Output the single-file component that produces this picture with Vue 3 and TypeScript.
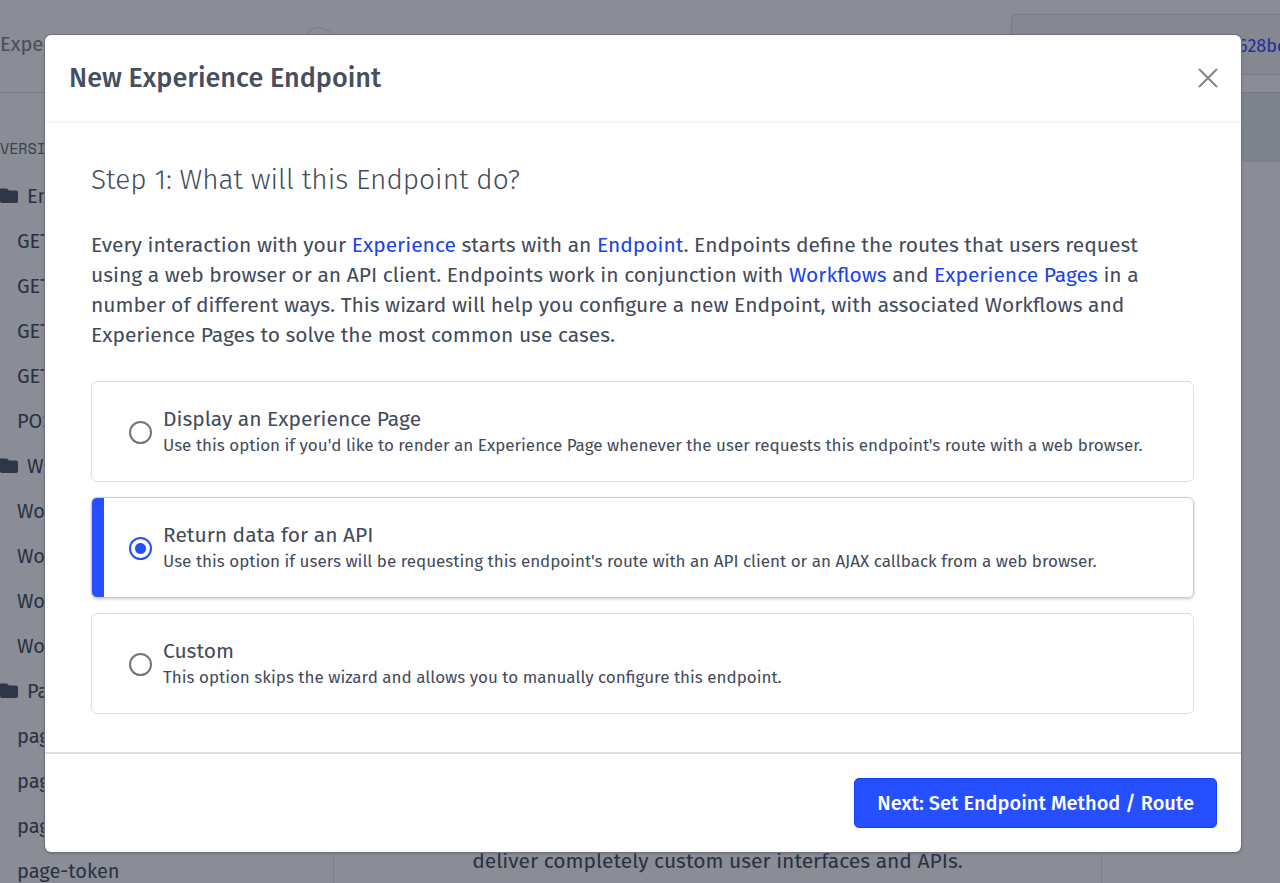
<script setup lang="ts">
import { ref } from 'vue'

interface Choice {
  id: string
  title: string
  description: string
}

interface NavRow {
  label: string
  folder?: boolean
}

const choices: Choice[] = [
  {
    id: 'page',
    title: 'Display an Experience Page',
    description:
      "Use this option if you'd like to render an Experience Page whenever the user requests this endpoint's route with a web browser.",
  },
  {
    id: 'api',
    title: 'Return data for an API',
    description:
      "Use this option if users will be requesting this endpoint's route with an API client or an AJAX callback from a web browser.",
  },
  {
    id: 'custom',
    title: 'Custom',
    description: 'This option skips the wizard and allows you to manually configure this endpoint.',
  },
]

const rows: NavRow[] = [
  { label: 'En', folder: true },
  { label: 'GET' },
  { label: 'GET' },
  { label: 'GET' },
  { label: 'GET' },
  { label: 'POS' },
  { label: 'Wo', folder: true },
  { label: 'Wo' },
  { label: 'Wo' },
  { label: 'Wo' },
  { label: 'Wo' },
  { label: 'Pa', folder: true },
  { label: 'pag' },
  { label: 'pag' },
  { label: 'pag' },
  { label: 'page-token' },
]

const selected = ref('api')
</script>

<template>
  <div class="app">
    <div class="page">
      <header class="topbar">
        <span class="crumb">Expe</span>
        <span class="ring"></span>
        <div class="token">628bd</div>
      </header>
      <div class="columns">
        <nav class="sidebar">
          <h3 class="version">VERSI</h3>
          <ul class="tree">
            <li v-for="(row, i) in rows" :key="i" class="row" :class="{ folder: row.folder }">
              <svg v-if="row.folder" class="folder-icon" viewBox="0 0 18 15" aria-hidden="true">
                <path d="M0 0.5H6Q7.5 0.5 8 1.5Q8.5 2.5 10 2.5H16Q18 2.5 18 4.5V13Q18 15 16 15H2Q0 15 0 13Z" />
              </svg>
              <span>{{ row.label }}</span>
            </li>
          </ul>
        </nav>
        <div class="workspace">
          <div class="band"></div>
          <div class="split">
            <div class="canvas">
              <p class="hint">deliver completely custom user interfaces and APIs.</p>
            </div>
            <div class="aside"></div>
          </div>
        </div>
      </div>
    </div>

    <div class="overlay">
      <form class="modal" role="dialog" aria-labelledby="dialog-title" @submit.prevent>
        <header class="modal-head">
          <h1 id="dialog-title">New Experience Endpoint</h1>
          <button type="button" class="close" aria-label="Close">
            <svg viewBox="0 0 20 20" aria-hidden="true"><path d="M1.5 1.5L18.5 18.5M18.5 1.5L1.5 18.5" /></svg>
          </button>
        </header>
        <section class="modal-body">
          <h2>Step 1: What will this Endpoint do?</h2>
          <p class="intro">
            Every interaction with your <a href="#">Experience</a> starts with an <a href="#">Endpoint</a>. Endpoints define the routes that users request<br />
            using a web browser or an API client. Endpoints work in conjunction with <a href="#">Workflows</a> and <a href="#">Experience Pages</a> in a<br />
            number of different ways. This wizard will help you configure a new Endpoint, with associated Workflows and<br />
            Experience Pages to solve the most common use cases.
          </p>
          <div class="choices">
            <label
              v-for="choice in choices"
              :key="choice.id"
              class="choice"
              :class="{ active: selected === choice.id }"
              :for="choice.id"
            >
              <input :id="choice.id" v-model="selected" type="radio" name="kind" :value="choice.id" />
              <span class="choice-text">
                <span class="choice-title">{{ choice.title }}</span>
                <span class="choice-desc">{{ choice.description }}</span>
              </span>
            </label>
          </div>
        </section>
        <footer class="modal-foot">
          <button type="submit" class="next">Next: Set Endpoint Method / Route</button>
        </footer>
      </form>
    </div>
  </div>
</template>

<style>
body {
  margin: 0;
}
</style>

<style scoped>
* {
  box-sizing: border-box;
}
.app {
  position: relative;
  min-height: 100vh;
  overflow: hidden;
  background: #8a8d95;
  color: #434a5b;
  font-family: 'Fira Sans', 'Noto Sans', sans-serif;
  font-size: 21px;
}
.page {
  position: absolute;
  inset: 0;
  overflow: hidden;
  display: flex;
  flex-direction: column;
  color: #293243;
}
.topbar {
  flex: none;
  height: 93px;
  display: flex;
  align-items: flex-start;
  border-bottom: 1px solid #747882;
}
.crumb {
  width: 303px;
  line-height: 28px;
  padding-top: 30px;
  font-size: 20px;
  color: #484d5b;
}
.ring {
  width: 32px;
  height: 32px;
  margin-top: 27px;
  border: 1px solid #777b84;
  border-radius: 50%;
}
.token {
  width: 269px;
  height: 61px;
  margin-top: 14px;
  margin-left: auto;
  padding-left: 226px;
  overflow: hidden;
  border: 1px solid #787b85;
  border-right: 0;
  border-radius: 5px 0 0 5px;
  background: #858891;
  color: #1b319c;
  font-size: 18px;
  line-height: 62px;
}
.columns {
  flex: 1;
  display: flex;
  min-height: 0;
}
.sidebar {
  flex: none;
  width: 334px;
  border-right: 1px solid #7b7f89;
}
.version {
  margin: 42px 0 12px;
  font-family: 'Space Mono', 'Liberation Mono', monospace;
  font-size: 15px;
  line-height: 26px;
  font-weight: 400;
  color: #3b4150;
}
.tree {
  margin: 0;
  padding: 0;
  list-style: none;
}
.row {
  display: flex;
  align-items: center;
  height: 45px;
  padding-left: 17px;
  font-size: 20px;
}
.row.folder {
  gap: 9px;
  padding-left: 0;
}
.folder-icon {
  width: 18px;
  height: 15px;
  fill: #2e3748;
}
.workspace {
  flex: 1;
  display: flex;
  flex-direction: column;
}
.band {
  height: 69px;
  background: #7d838c;
}
.split {
  flex: 1;
  display: flex;
}
.canvas {
  flex: 1;
  display: flex;
  align-items: flex-end;
  justify-content: center;
  border-right: 1px solid #7b7f89;
}
.hint {
  margin: 0 0 7px;
  line-height: 30px;
}
.aside {
  width: 178px;
}
.overlay {
  position: relative;
  padding: 35px 39px 31px 45px;
}
.modal {
  border-radius: 6px;
  background: #fff;
  box-shadow: 0 0 0 1px #6f737e, 0 1px 3px #5c616e;
}
.modal-head {
  display: flex;
  align-items: center;
  justify-content: space-between;
  height: 88px;
  padding: 0 22px 0 24px;
  border-bottom: 2px solid #f5f5f6;
}
h1 {
  margin: 0;
  font-size: 27px;
  line-height: 36px;
  font-weight: 500;
  color: #474e5f;
}
.close {
  width: 22px;
  height: 22px;
  padding: 1px;
  border: 0;
  background: none;
}
.close svg {
  display: block;
  width: 20px;
  height: 20px;
  fill: none;
  stroke: #81868f;
  stroke-width: 2;
  stroke-linecap: round;
}
.modal-body {
  padding: 36px 47px 38px 46px;
}
h2 {
  margin: 0 0 29px;
  font-size: 28px;
  line-height: 42px;
  font-weight: 300;
}
.intro {
  margin: 0 0 31px;
  line-height: 30px;
  white-space: nowrap;
}
a {
  color: #1a44e8;
  text-decoration: none;
}
.choices {
  display: flex;
  flex-direction: column;
  gap: 15px;
}
.choice {
  display: flex;
  align-items: center;
  gap: 11px;
  height: 101px;
  padding: 0 36px 0 37px;
  border: 1px solid #dedede;
  border-radius: 6px;
}
.choice.active {
  border-color: #cbcccf;
  background: linear-gradient(to right, #264fff 12px, #fff 12px);
  box-shadow: 0 1px 3px #c8c8c8;
}
input {
  flex: none;
  appearance: none;
  width: 23px;
  height: 23px;
  margin: 2px 0 0;
  border: 2px solid #757575;
  border-radius: 50%;
  background: #fff;
}
input:checked {
  border-color: #264fff;
  background: radial-gradient(circle, #264fff 5px, #fff 6px);
}
.choice-text {
  display: flex;
  flex-direction: column;
  white-space: nowrap;
}
.choice-title {
  line-height: 28px;
}
.choice-desc {
  font-size: 17px;
  line-height: 26px;
}
.modal-foot {
  display: flex;
  justify-content: flex-end;
  padding: 24px;
  border-top: 2px solid #dedfe1;
}
.next {
  height: 50px;
  padding: 0 22px;
  border: 1px solid #1040ff;
  border-radius: 5px;
  background: #264fff;
  color: #fff;
  font: inherit;
  font-size: 20px;
  font-weight: 500;
}
</style>
